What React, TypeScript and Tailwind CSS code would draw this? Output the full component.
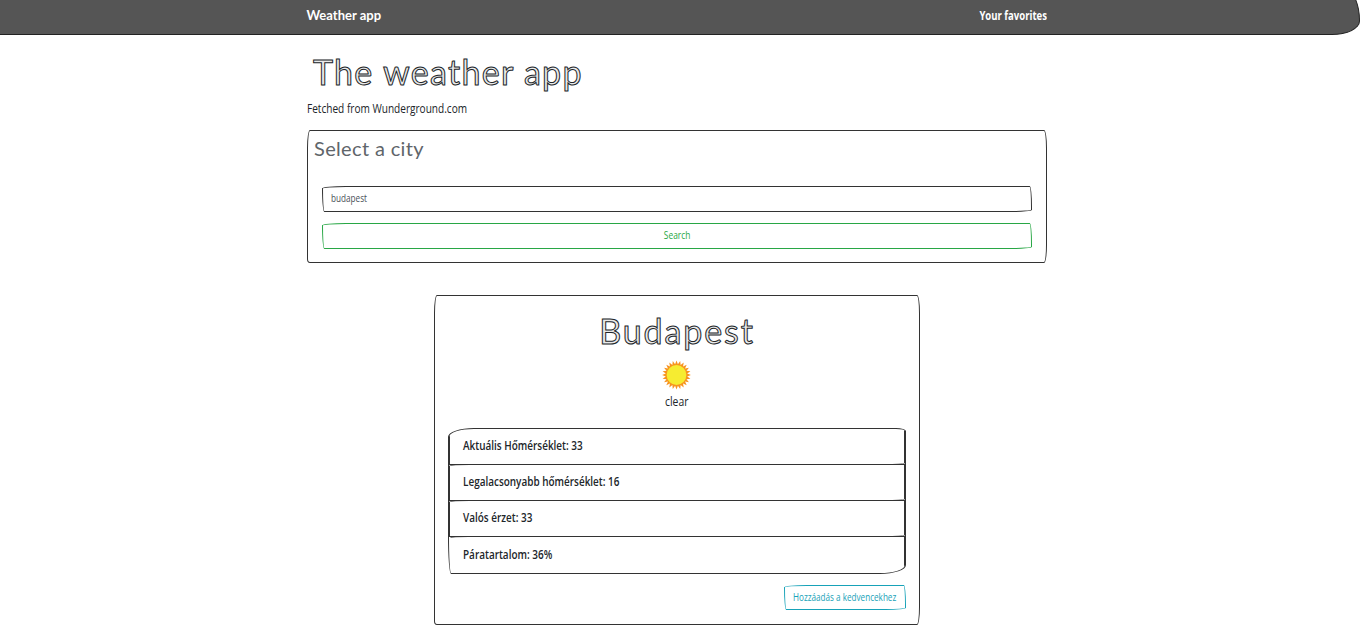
import React from "react";

const conditions = [
  "Aktuális Hőmérséklet: 33",
  "Legalacsonyabb hőmérséklet: 16",
  "Valós érzet: 33",
  "Páratartalom: 36%",
];

const sketchButton =
  "border rounded-[255px_25px_225px_25px/25px_225px_25px_255px]";
const sketchCard = "border border-[#333] rounded-[3px_3px_3px_3px/18px_18px_18px_4px]";
const sketchTitle =
  "h-[46px] whitespace-nowrap font-['Lato',sans-serif] text-[34px] leading-[46px] text-[#212529]/10 [-webkit-text-stroke:1px_#212529]";

function Sun() {
  const points = Array.from({ length: 48 }, (_, i) => {
    const r = i % 2 === 0 ? 14.4 : 10.8;
    const a = (i * Math.PI) / 24;
    return `${(14 + r * Math.sin(a)).toFixed(2)},${(14 - r * Math.cos(a)).toFixed(2)}`;
  }).join(" ");
  return (
    <svg width="28" height="28" viewBox="0 0 28 28" className="overflow-visible">
      <polygon points={points} fill="#f7941e" />
      <circle cx="14" cy="14" r="9.9" fill="#f6ec31" />
    </svg>
  );
}

export default function App() {
  return (
    <div className="h-[636px] overflow-hidden bg-white font-['Open_Sans',sans-serif] text-[#212529]">
      <nav className="-mt-[10px] h-[45px] rounded-[0_25px_50px_0/0_55px_25px_0] border border-l-0 border-[#222] bg-[#555] pt-[14px] text-white">
        <div className="mx-auto flex w-[740px] -translate-x-[3px] justify-between whitespace-nowrap leading-5">
          <span className="font-['Lato',sans-serif] text-[13px] font-bold">Weather app</span>
          <span className="origin-right scale-x-[0.735] text-[13px] font-bold">Your favorites</span>
        </div>
      </nav>

      <main className="mx-auto w-[740px] -translate-x-[3px]">
        <h1 className={`${sketchTitle} mt-[14px] ml-[6px] tracking-[1.3px]`}>
          The weather app
        </h1>
        <p className="mt-[3px] h-[21px] w-max origin-left scale-x-[0.775] whitespace-nowrap text-[13px] leading-[21px]">
          Fetched from Wunderground.com
        </p>

        <section className={`${sketchCard} mt-[11px] h-[133px] px-[14px]`}>
          <h2 className="-ml-2 h-[55px] pt-[4px] font-['Lato',sans-serif] text-[20px] leading-[27px] tracking-[0.35px] text-[#60656a]">
            Select a city
          </h2>
          <div className={`${sketchButton} flex h-[26px] items-center border-[#333] px-2 text-[10.5px] text-[#495057]`}>
            <span className="origin-left scale-x-[0.78]">budapest</span>
          </div>
          <button className={`${sketchButton} mt-[11px] flex h-[26px] w-full items-center justify-center border-[#28a745] text-[10.5px] text-[#28a745]`}>
            <span className="translate-x-[0.5px] scale-x-[0.8]">Search</span>
          </button>
        </section>

        <section className={`${sketchCard} mt-8 ml-[127px] flex h-[330px] w-[486px] flex-col items-center px-[13px]`}>
          <h1 className={`${sketchTitle} mt-[12px] tracking-[1.9px]`}>Budapest</h1>
          <div className="mt-[7px] h-[28px] -translate-x-[0.5px]">
            <Sun />
          </div>
          <p className="mt-[2px] h-5 scale-x-[0.8] text-[13px] leading-5">clear</p>
          <ul className="mt-[17px] h-[146px] w-[458px] overflow-hidden rounded-[26px_10px_26px_3px/9px_3px_9px_38px] border border-[#333]">
            {conditions.map((label) => (
              <li
                key={label}
                className="-mt-px flex h-[37px] items-center rounded-[20px_0_20px_0/2px_0_2px_0] border border-[#333] px-[13px] text-[13px] font-semibold whitespace-nowrap last:border-b-0 last:border-l-transparent last:pt-px"
              >
                <span className="origin-left -translate-y-px scale-x-[0.765]">{label}</span>
              </li>
            ))}
          </ul>
          <button className={`${sketchButton} mt-[11px] flex h-[25px] w-[122px] items-center justify-center self-end border-[#17a2b8] whitespace-nowrap text-[10.5px] text-[#17a2b8]`}>
            <span className="scale-x-[0.775]">Hozzáadás a kedvencekhez</span>
          </button>
        </section>
      </main>
    </div>
  );
}
